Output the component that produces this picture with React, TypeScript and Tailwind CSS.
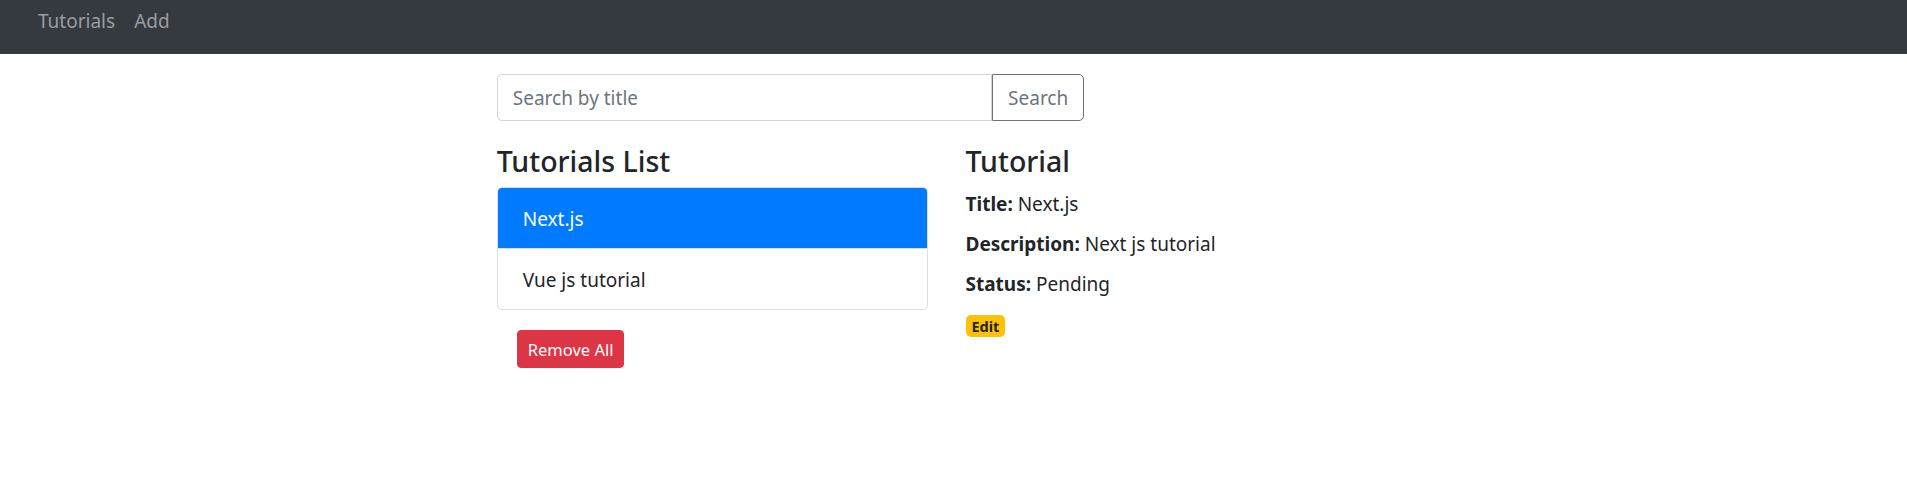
import React from "react";

const font = { fontFamily: '"Noto Sans", "Open Sans", sans-serif' };

export default function App() {
  return (
    <div className="min-h-screen bg-white text-[#212529]" style={font}>
      {/* Navbar */}
      <nav className="h-[54px] bg-[#343a40] pt-[6px] pl-[28px] flex">
        <a className="px-[10px] text-[19px] leading-[30px] text-[#9a9da0]">Tutorials</a>
        <a className="pl-[9px] pr-[10px] text-[19px] leading-[30px] text-[#9a9da0]">Add</a>
      </nav>

      <div className="ml-[478px] mt-[20px] w-[937.5px] flex flex-wrap">
        {/* Search */}
        <div className="w-2/3 px-[18.75px]">
          <div className="flex mb-[20px] h-[47px]">
            <input
              placeholder="Search by title"
              className="flex-1 min-w-0 border border-[#ced4da] rounded-l-[5px] px-[15px] pt-[1px] text-[19px] placeholder:text-[#6c757d] outline-none"
            />
            <button className="border border-[#6c757d] rounded-r-[5px] px-[15px] pt-[1px] text-[19px] text-[#6c757d]">
              Search
            </button>
          </div>
        </div>

        {/* List */}
        <div className="w-1/2 px-[18.75px]">
          <h4 className="text-[28.5px] font-medium leading-[36px] pt-[2px] mb-[8px]">Tutorials List</h4>
          <ul className="border border-black/[0.125] rounded-[5px] overflow-hidden">
            <li className="bg-[#007bff] text-white px-[25px] pt-[16px] pb-[14px] text-[19px] leading-[30px]">Next.js</li>
            <li className="border-t border-black/[0.125] px-[25px] pt-[16px] pb-[14px] text-[19px] leading-[30px]">
              Vue js tutorial
            </li>
          </ul>
          <button className="mt-[20px] ml-[20px] bg-[#dc3545] text-white border border-[#dc3545] rounded-[4px] px-[10px] pt-[6px] pb-[4px] text-[16.5px] leading-[26px]">
            Remove All
          </button>
        </div>

        {/* Detail */}
        <div className="w-1/2 px-[18.75px]">
          <h4 className="text-[28.5px] font-medium leading-[36px] pt-[2px] mb-[10px]">Tutorial</h4>
          <div className="text-[19px] leading-[30px]">
            <label className="inline-block mb-[10px]"><strong>Title:</strong></label> Next.js
          </div>
          <div className="text-[19px] leading-[30px]">
            <label className="inline-block mb-[10px]"><strong>Description:</strong></label> Next js tutorial
          </div>
          <div className="text-[19px] leading-[30px]">
            <label className="inline-block mb-[10px]"><strong>Status:</strong></label> Pending
          </div>
          <div className="pt-[5px]">
            <a className="inline-block bg-[#ffc107] text-[#212529] font-bold text-[14.5px] leading-none px-[6px] pt-[4px] pb-[3.5px] rounded-[5px]">
              Edit
            </a>
          </div>
        </div>
      </div>
    </div>
  );
}
